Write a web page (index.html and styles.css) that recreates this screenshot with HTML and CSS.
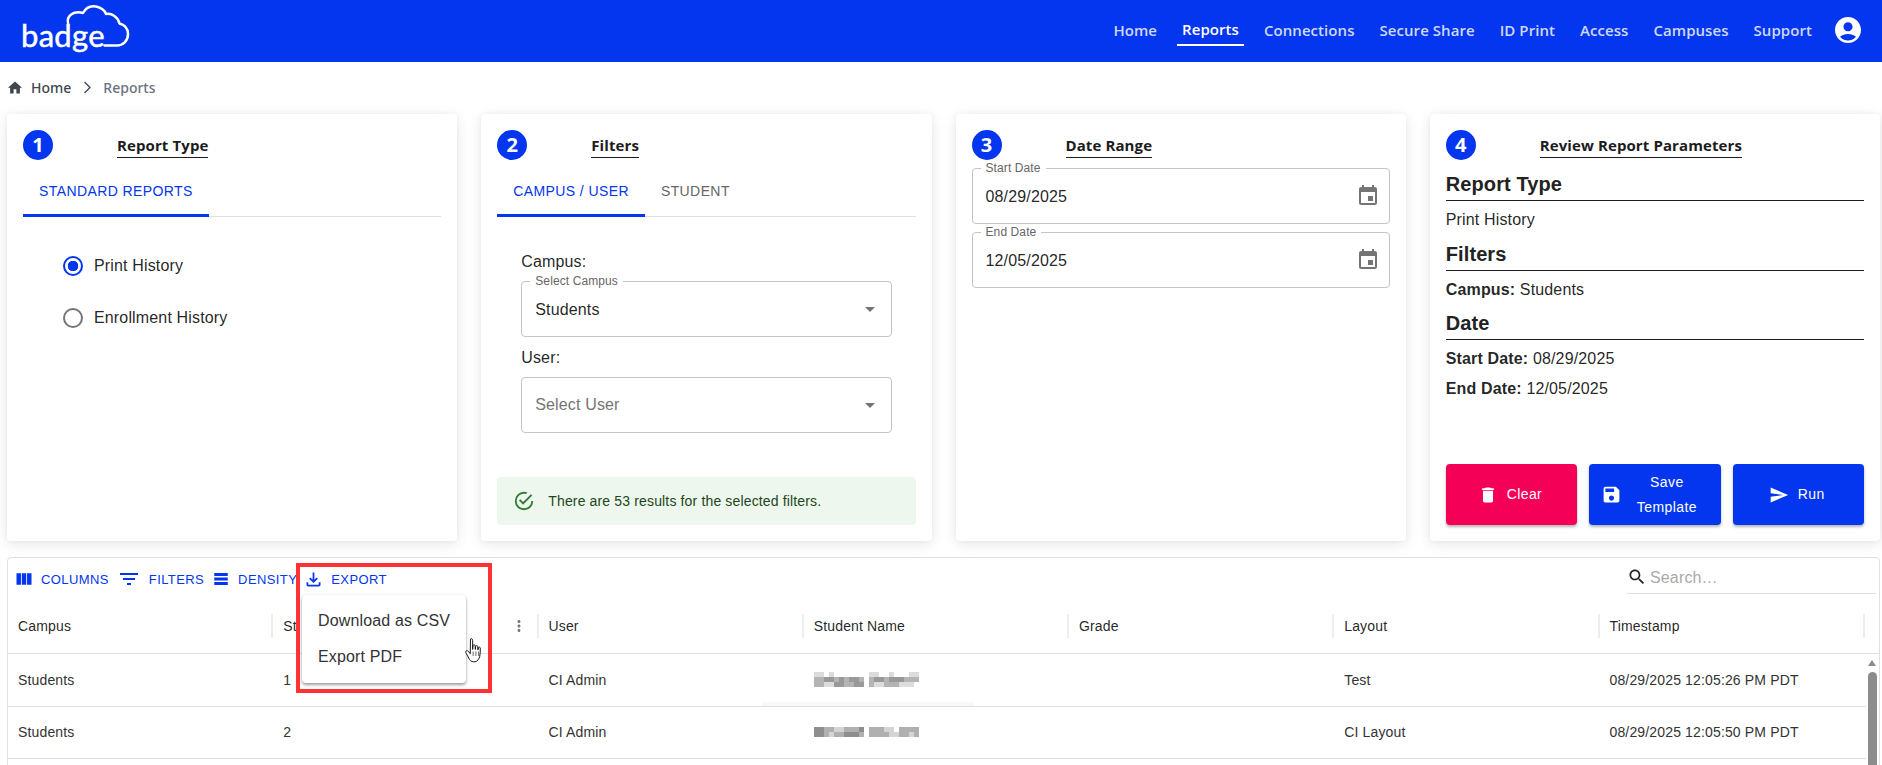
FILE: index.html
```html
<!DOCTYPE html>
<html lang="en">
<head>
<meta charset="utf-8">
<title>Reports</title>
<link rel="stylesheet" href="styles.css">
</head>
<body>
<header class="topbar">
  <a class="logo">badge
    <svg class="logo-cloud" viewBox="0 0 135 62" width="135" height="62"><path d="M68 23C66.500 16 73 10.500 83 13C86 7.500 91 5.500 96 6.500C101 7.500 104.500 10 106 14C112 13 118 17 119.500 23.500C125 25 128 29 128 34C128 41 123 45.500 117 45.500H104.500" fill="none" stroke="#fff" stroke-width="2.500" stroke-linecap="round" stroke-linejoin="round"/></svg>
  </a>
  <nav class="nav">
    <a class="nav-link">Home</a>
    <a class="nav-link active">Reports</a>
    <a class="nav-link">Connections</a>
    <a class="nav-link">Secure Share</a>
    <a class="nav-link">ID Print</a>
    <a class="nav-link">Access</a>
    <a class="nav-link">Campuses</a>
    <a class="nav-link">Support</a>
  </nav>
  <svg class="avatar" viewBox="2 2 20 20"><path d="M12 2C6.480 2 2 6.480 2 12s4.480 10 10 10 10-4.480 10-10S17.520 2 12 2zm0 4c1.930 0 3.500 1.570 3.500 3.500S13.930 13 12 13s-3.500-1.570-3.500-3.500S10.070 6 12 6zm0 14c-2.030 0-4.430-.82-6.140-2.880C7.550 15.800 9.680 15 12 15s4.450.8 6.140 2.120C16.430 19.180 14.030 20 12 20z"/></svg>
</header>

<div class="crumbs">
  <svg class="crumb-home" viewBox="2 3 20 17"><path d="M10 20v-6h4v6h5v-8h3L12 3 2 12h3v8z"/></svg>
  <span class="crumb-strong">Home</span>
  <svg class="crumb-sep" viewBox="0 0 8 13"><path d="M1.500 1 7 6.500 1.500 12" fill="none" stroke="#3f4650" stroke-width="1.300"/></svg>
  <span class="crumb-current">Reports</span>
</div>

<main class="cards">
  <section class="card">
    <div class="card-head"><span class="step">1</span><h2 class="card-title">Report Type</h2></div>
    <div class="tabs"><span class="tab selected">Standard Reports</span></div>
    <div class="radios">
      <label class="radio-row"><span class="radio on"></span>Print History</label>
      <label class="radio-row"><span class="radio"></span>Enrollment History</label>
    </div>
  </section>

  <section class="card">
    <div class="card-head"><span class="step">2</span><h2 class="card-title">Filters</h2></div>
    <div class="tabs"><span class="tab selected">Campus / User</span><span class="tab">Student</span></div>
    <div class="filter-form">
      <div class="field-label">Campus:</div>
      <div class="outlined">
        <span class="float-label">Select Campus</span>
        <span class="value">Students</span>
        <svg class="drop" viewBox="0 0 24 24"><path d="M7 10l5 5 5-5z"/></svg>
      </div>
      <div class="field-label">User:</div>
      <div class="outlined">
        <span class="value muted">Select User</span>
        <svg class="drop" viewBox="0 0 24 24"><path d="M7 10l5 5 5-5z"/></svg>
      </div>
    </div>
    <div class="alert">
      <svg class="alert-icon" viewBox="0 0 24 24"><path d="M20 12a8 8 0 0 1-8 8 8 8 0 0 1-8-8 8 8 0 0 1 8-8c.76 0 1.500.11 2.200.31l1.570-1.570A9.822 9.822 0 0 0 12 2 10 10 0 0 0 2 12a10 10 0 0 0 10 10 10 10 0 0 0 10-10M7.910 10.080 6.500 11.500 11 16 21 6l-1.410-1.420L11 13.170l-3.090-3.090z"/></svg>
      <span>There are 53 results for the selected filters.</span>
    </div>
  </section>

  <section class="card">
    <div class="card-head"><span class="step">3</span><h2 class="card-title">Date Range</h2></div>
    <div class="dates">
      <div class="outlined">
        <span class="float-label">Start Date</span>
        <span class="value">08/29/2025</span>
        <svg class="cal" viewBox="0 0 24 24"><path d="M17 12h-5v5h5v-5zM16 1v2H8V1H6v2H5c-1.110 0-1.990.9-1.990 2L3 19c0 1.100.89 2 2 2h14c1.100 0 2-.9 2-2V5c0-1.100-.9-2-2-2h-1V1h-2zm3 18H5V8h14v11z"/></svg>
      </div>
      <div class="outlined">
        <span class="float-label">End Date</span>
        <span class="value">12/05/2025</span>
        <svg class="cal" viewBox="0 0 24 24"><path d="M17 12h-5v5h5v-5zM16 1v2H8V1H6v2H5c-1.110 0-1.990.9-1.990 2L3 19c0 1.100.89 2 2 2h14c1.100 0 2-.9 2-2V5c0-1.100-.9-2-2-2h-1V1h-2zm3 18H5V8h14v11z"/></svg>
      </div>
    </div>
  </section>

  <section class="card">
    <div class="card-head"><span class="step">4</span><h2 class="card-title">Review Report Parameters</h2></div>
    <h3 class="review-head">Report Type</h3>
    <p class="review-row first-row">Print History</p>
    <h3 class="review-head slim">Filters</h3>
    <p class="review-row"><b>Campus:</b> Students</p>
    <h3 class="review-head">Date</h3>
    <p class="review-row date-row"><b>Start Date:</b> 08/29/2025</p>
    <p class="review-row date-row"><b>End Date:</b> 12/05/2025</p>
    <div class="actions">
      <button class="btn danger"><svg class="btn-icon" viewBox="0 0 24 24"><path d="M6 19c0 1.100.9 2 2 2h8c1.100 0 2-.9 2-2V7H6v12zM19 4h-3.500l-1-1h-5l-1 1H5v2h14V4z"/></svg><span>Clear</span></button>
      <button class="btn save"><svg class="btn-icon" viewBox="0 0 24 24"><path d="M17 3H5c-1.110 0-2 .9-2 2v14c0 1.100.89 2 2 2h14c1.100 0 2-.9 2-2V7l-4-4zm-5 16c-1.660 0-3-1.340-3-3s1.340-3 3-3 3 1.340 3 3-1.340 3-3 3zm3-10H5V5h10v4z"/></svg><span class="save-text">Save Template</span></button>
      <button class="btn"><svg class="btn-icon" viewBox="0 0 24 24"><path d="M2.010 21 23 12 2.010 3 2 10l15 2-15 2z"/></svg><span>Run</span></button>
    </div>
  </section>
</main>

<section class="grid">
  <div class="toolbar">
    <a class="tool tool-col"><svg class="ti ti-col" viewBox="0 0 24 24"><path d="M14.670 5v14H9.330V5h5.340zm1 14H21V5h-5.330v14zm-7.340 0V5H3v14h5.330z"/></svg>Columns</a>
    <a class="tool"><svg class="ti ti-fil" viewBox="0 0 24 24"><path d="M10 18h4v-2h-4v2zM3 6v2h18V6H3zm3 7h12v-2H6v2z"/></svg>Filters</a>
    <a class="tool"><svg class="ti ti-den" viewBox="0 0 24 24"><path d="M21 8H3V4h18v4zm0 2H3v4h18v-4zm0 6H3v4h18v-4z"/></svg>Density</a>
    <a class="tool tool-export"><svg class="ti ti-exp" viewBox="0 0 24 24"><path d="M18 15v3H6v-3H4v3c0 1.100.9 2 2 2h12c1.100 0 2-.9 2-2v-3h-2zm-1-4-1.410-1.410L13 12.170V4h-2v8.170L8.410 9.590 7 11l5 5 5-5z"/></svg>Export</a>
    <div class="search">
      <svg class="search-icon" viewBox="0 0 24 24"><path d="M15.500 14h-.79l-.28-.27C15.410 12.590 16 11.110 16 9.500 16 5.910 13.090 3 9.500 3S3 5.910 3 9.500 5.910 16 9.500 16c1.610 0 3.090-.59 4.230-1.570l.27.28v.79l5 4.990L20.490 19l-4.990-5zm-6 0C7.010 14 5 11.990 5 9.500S7.010 5 9.500 5 14 7.010 14 9.500 11.990 14 9.500 14z"/></svg>
      <span class="search-text">Search…</span>
    </div>
  </div>

  <div class="thead">
    <div class="th">Campus</div>
    <div class="th"><span>St</span><svg class="kebab" viewBox="0 0 24 24"><path d="M12 8c1.100 0 2-.9 2-2s-.9-2-2-2-2 .9-2 2 .9 2 2 2zm0 2c-1.100 0-2 .9-2 2s.9 2 2 2 2-.9 2-2-.9-2-2-2zm0 6c-1.100 0-2 .9-2 2s.9 2 2 2 2-.9 2-2-.9-2-2-2z"/></svg></div>
    <div class="th">User</div>
    <div class="th">Student Name</div>
    <div class="th">Grade</div>
    <div class="th">Layout</div>
    <div class="th">Timestamp</div>
  </div>

  <div class="tbody">
    <div class="rows">
      <div class="tr">
        <div class="td">Students</div><div class="td">1</div><div class="td">CI Admin</div>
        <div class="td"><svg class="blur" width="105" height="15" viewBox="0 0 105 15"><path fill="#dcdcdc" d="M0 0h10v5H0zM15 0h5v5h-5zM55 0h10v5H55zM75 0h5v5h-5zM95 0h10v5H95zM10 10h10v5H10zM60 10h10v5H60zM85 10h15v5H85z"/><path fill="#b4b4b4" d="M0 5h10v5H0zM20 5h5v5h-5zM30 5h5v5h-5zM45 5h5v5h-5zM55 5h5v5h-5zM70 5h5v5h-5zM90 5h15v5H90zM0 10h10v5H0zM30 10h10v5H30zM55 10h5v5h-5zM70 10h15v5H70z"/><path fill="#999" d="M10 5h10v5H10zM25 5h5v5h-5zM35 5h10v5H35zM60 5h10v5H60zM75 5h15v5H75zM20 10h10v5H20zM40 10h10v5H40z"/></svg></div>
        <div class="td"></div><div class="td">Test</div><div class="td">08/29/2025 12:05:26 PM PDT</div>
      </div>
      <div class="tr">
        <div class="td">Students</div><div class="td">2</div><div class="td">CI Admin</div>
        <div class="td"><svg class="blur" width="105" height="10" viewBox="0 0 105 10"><path fill="#d4d4d4" d="M20 0h10v5H20zM15 5h5v5h-5zM70 0h10v5H70zM95 5h5v5h-5zM75 5h10v5H75z"/><path fill="#b0b0b0" d="M10 0h10v5H10zM30 0h15v5H30zM55 0h15v5H55zM85 0h20v5H85zM10 5h5v5h-5zM20 5h10v5H20zM45 5h5v5h-5zM55 5h20v5H55zM85 5h10v5H85zM100 5h5v5h-5z"/><path fill="#8e8e8e" d="M0 0h10v10H0zM45 0h5v5h-5zM30 5h15v5H30z"/></svg></div>
        <div class="td"></div><div class="td">CI Layout</div><div class="td">08/29/2025 12:05:50 PM PDT</div>
      </div>
      <div class="tr"></div>
    </div>
    <div class="scrollbar"><span class="scroll-up"></span><span class="scroll-thumb"></span></div>
  </div>

  <span class="redact-band"></span>
  <div class="highlight"></div>
  <div class="menu">
    <div class="menu-item">Download as CSV</div>
    <div class="menu-item">Export PDF</div>
  </div>
  <svg class="cursor" viewBox="0.500 0.500 15.500 23" width="18" height="25"><path d="M5 1.500c1-.8 2 0 2 1V11l.3-3.500c.2-1 1.900-1 2 .1l.2 3.400.3-2.800c.2-1 1.800-.9 1.900.2l.2 3 .4-2c.3-.9 1.700-.7 1.700.4.100 2.600.1 5.500-.5 7.700-.6 2.200-1.900 4.600-4.300 4.900-2 .2-4-.4-5-2L1 14.500c-.7-1-.4-2.100.5-2.300.8-.2 1.500.4 2 1l1.300 1.800z" fill="#fff" stroke="#111" stroke-width=".9" stroke-linejoin="round"/><path d="M7.500 13v4M10 13v4M12.500 13v4" stroke="#111" stroke-width=".6" fill="none"/></svg>
</section>
</body>
</html>
```
FILE: styles.css
```css
* { box-sizing: border-box; }
html, body { margin: 0; padding: 0; height: 765px; overflow: hidden; background: #fff; }
body { font-family: "Liberation Sans", Arial, sans-serif; font-size: 16px; letter-spacing: .15px; color: rgba(0,0,0,.87); }
h2, h3, p { margin: 0; }

.topbar { height: 62px; background: #0336ee; display: flex; align-items: flex-start; padding-right: 21px; color: #fff; }
.logo { position: relative; margin-left: 21px; margin-top: 15px; font-family: Lato, sans-serif; font-size: 31px; line-height: 40px; letter-spacing: .3px; color: #fff; -webkit-text-stroke: .5px #fff; }
.logo-cloud { position: absolute; left: -21px; top: -15px; }
.nav { margin-left: auto; margin-top: 15px; display: flex; gap: 15px; }
.nav-link { height: 31px; padding: 0 5px; font-family: "Open Sans", sans-serif; font-weight: 600; font-size: 15px; letter-spacing: .06px; line-height: 31px; color: rgba(255,255,255,.82); white-space: nowrap; }
.nav-link.active { color: #fff; border-bottom: 2px solid #fff; line-height: 29px; }
.avatar { width: 26px; height: 26px; fill: #fff; margin-left: 18px; margin-top: 17px; }

.crumbs { height: 52px; display: flex; align-items: center; padding: 0 0 1px 8px; font-family: "Noto Sans", sans-serif; font-size: 14px; font-weight: 500; letter-spacing: 0; }
.crumb-home { width: 14px; height: 13px; fill: #3f4650; margin-right: 9px; }
.crumb-strong { color: #3f4650; }
.crumb-sep { width: 8px; height: 13px; margin: 0 12px; }
.crumb-current { color: #6b7280; }

.cards { display: grid; grid-template-columns: repeat(4, 1fr); gap: 24px; margin: 0 2px 0 7px; height: 427px; }
.card { background: #fff; border-radius: 4px; box-shadow: 0 3px 14px rgba(0,0,0,.1), 0 0 4px rgba(0,0,0,.04); padding: 16px; display: flex; flex-direction: column; min-width: 0; }
.card-head { display: flex; height: 30px; margin-bottom: 8px; flex: none; }
.step { width: 30px; height: 30px; border-radius: 50%; background: #0336ee; color: #fff; font-family: "Open Sans", sans-serif; font-weight: 700; font-size: 20px; letter-spacing: 0; line-height: 29px; text-align: center; flex: none; }
.card-title { margin-left: 64px; height: 28px; font-family: "Open Sans", sans-serif; font-size: 15px; font-weight: 700; letter-spacing: .1px; line-height: 30px; color: #1c1c1c; border-bottom: 1px solid #1c1c1c; white-space: nowrap; }

.tabs { display: flex; height: 49px; border-bottom: 1px solid #e0e0e0; flex: none; }
.tab { height: 49px; padding: 0 16px; font-size: 14px; letter-spacing: .4px; line-height: 46px; text-transform: uppercase; color: #666; white-space: nowrap; }
.tab.selected { color: #0336ee; border-bottom: 3px solid #0336ee; }

.radios { margin-top: 23px; padding-left: 40px; }
.radio-row { height: 52px; display: flex; align-items: center; gap: 11px; font-size: 16px; }
.radio { width: 20px; height: 20px; border-radius: 50%; border: 2px solid #757575; flex: none; }
.radio.on { border-color: #0336ee; background: radial-gradient(circle, #0336ee 0 5px, #fff 5.500px); }

.filter-form { margin-top: 33px; padding: 0 24px; }
.field-label { height: 24px; line-height: 24px; margin-bottom: 7px; }
.outlined + .field-label { margin-top: 8px; margin-bottom: 8px; line-height: 26px; }
.outlined { position: relative; height: 56px; border: 1px solid #c4c4c4; border-radius: 4px; display: flex; align-items: center; justify-content: space-between; padding: 0 9px 0 13px; }
.float-label { position: absolute; left: 8px; top: -8px; padding: 0 5px; background: #fff; font-size: 12px; letter-spacing: .1px; line-height: 14px; color: #666; }
.value { font-size: 16px; padding-top: 2px; }
.value.muted { color: #757575; padding-top: 0; }
.drop { width: 24px; height: 24px; fill: #757575; }
.cal { width: 24px; height: 24px; fill: #757575; }

.alert { margin-top: auto; height: 48px; background: #edf7ed; border-radius: 4px; display: flex; align-items: center; padding-left: 16px; font-size: 14px; letter-spacing: .15px; color: #1e4620; flex: none; }
.alert-icon { width: 22px; height: 22px; fill: #2e7d32; margin-right: 13px; }

.dates { display: flex; flex-direction: column; gap: 8px; }

.review-head { height: 33px; line-height: 32px; font-size: 20px; font-weight: 700; letter-spacing: .1px; border-bottom: 1px solid #1c1c1c; color: #222; flex: none; }
.review-head.slim { height: 33px; }
.review-row { height: 36px; line-height: 38px; font-size: 16px; flex: none; }
.review-row.first-row { height: 37px; }
.review-row b { font-weight: 700; }
.date-row { height: 30px; line-height: 32px; }
.review-head + .date-row { margin-top: 3px; }
.actions { margin-top: auto; display: grid; grid-template-columns: repeat(3, 1fr); gap: 12px; flex: none; }
.btn { height: 61px; border: 0; border-radius: 4px; background: #0336ee; color: #fff; font: 14px/25px "Liberation Sans", Arial, sans-serif; letter-spacing: .4px; display: flex; align-items: center; justify-content: center; gap: 9px; padding: 0 17px 0 14px; box-shadow: 0 2px 3px rgba(0,0,0,.3); }
.btn.danger { background: #f50057; }
.btn-icon { width: 20px; height: 20px; fill: #fff; flex: none; }
.save { justify-content: flex-start; padding: 0 14px 0 12px; }
.save .btn-icon { width: 21px; height: 21px; }
.save-text { flex: 1; text-align: center; padding-right: 4px; }

.grid { position: relative; margin: 16px 2px 0 7px; height: 300px; border: 1px solid #e0e0e0; border-radius: 4px; font-size: 14px; }
.toolbar { height: 42px; display: flex; align-items: center; padding-left: 6px; gap: 8px; }
.tool { display: flex; align-items: center; gap: 8px; font-size: 13px; letter-spacing: .4px; text-transform: uppercase; color: #0336ee; white-space: nowrap; }
.tool-col { gap: 7px; }
.ti { fill: #0336ee; flex: none; }
.ti-col { width: 20px; height: 20px; }
.ti-fil { width: 24px; height: 24px; }
.ti-den { width: 18px; height: 18px; }
.ti-exp { width: 21px; height: 21px; }
.tool-export { gap: 7px; margin-left: -2px; }
.search { margin-left: auto; margin-right: 3px; margin-top: -1px; width: 249px; height: 30px; display: flex; align-items: center; gap: 3px; padding: 0 0 3px 0; border-bottom: 1px solid #e0e0e0; font-size: 16px; color: #a9a9a9; }
.search-icon { width: 20px; height: 20px; fill: #222; }
.search-text { padding-top: 2px; }

.thead { display: grid; grid-template-columns: repeat(7, 265.250px); height: 54px; padding-top: 14px; border-bottom: 1px solid #e0e0e0; }
.th { height: 24px; padding-left: 10px; line-height: 24px; border-right: 2px solid #eee; display: flex; justify-content: space-between; align-items: center; }
.kebab { width: 18px; height: 18px; fill: #757575; margin-right: 9px; }
.tbody { display: flex; height: 200px; }
.rows { width: 1858px; flex: none; }
.tr { display: grid; grid-template-columns: repeat(7, 265.250px); height: 52.500px; border-bottom: 1px solid #e0e0e0; align-items: center; color: #333; }
.td { padding-left: 10px; min-width: 0; white-space: nowrap; }
.blur { display: block; shape-rendering: crispEdges; }
.scrollbar { flex: 1; display: flex; flex-direction: column; align-items: center; padding-top: 6px; margin-left: -1px; }
.scroll-up { width: 0; height: 0; border-left: 4.500px solid transparent; border-right: 4.500px solid transparent; border-bottom: 6px solid #8c8c8c; }
.scroll-thumb { width: 9px; flex: 1; margin-top: 6px; background: #8c8c8c; border-radius: 5px 5px 0 0; }

.redact-band { position: absolute; left: 754px; top: 144px; width: 212px; height: 4px; background: #f8f8f8; }
.highlight { position: absolute; left: 288px; top: 5px; width: 196px; height: 130px; border: 4px solid #ff3333; }
.menu { position: absolute; left: 294px; top: 37px; width: 164px; height: 88px; padding: 7px 0; background: #fff; border-radius: 4px; box-shadow: 0 2px 3px rgba(0,0,0,.35), 0 0 4px rgba(0,0,0,.08); }
.menu-item { height: 36px; line-height: 37px; padding-left: 16px; font-size: 16px; color: #333; }
.menu-item + .menu-item { line-height: 38px; }
.cursor { position: absolute; left: 457px; top: 80px; }
```
